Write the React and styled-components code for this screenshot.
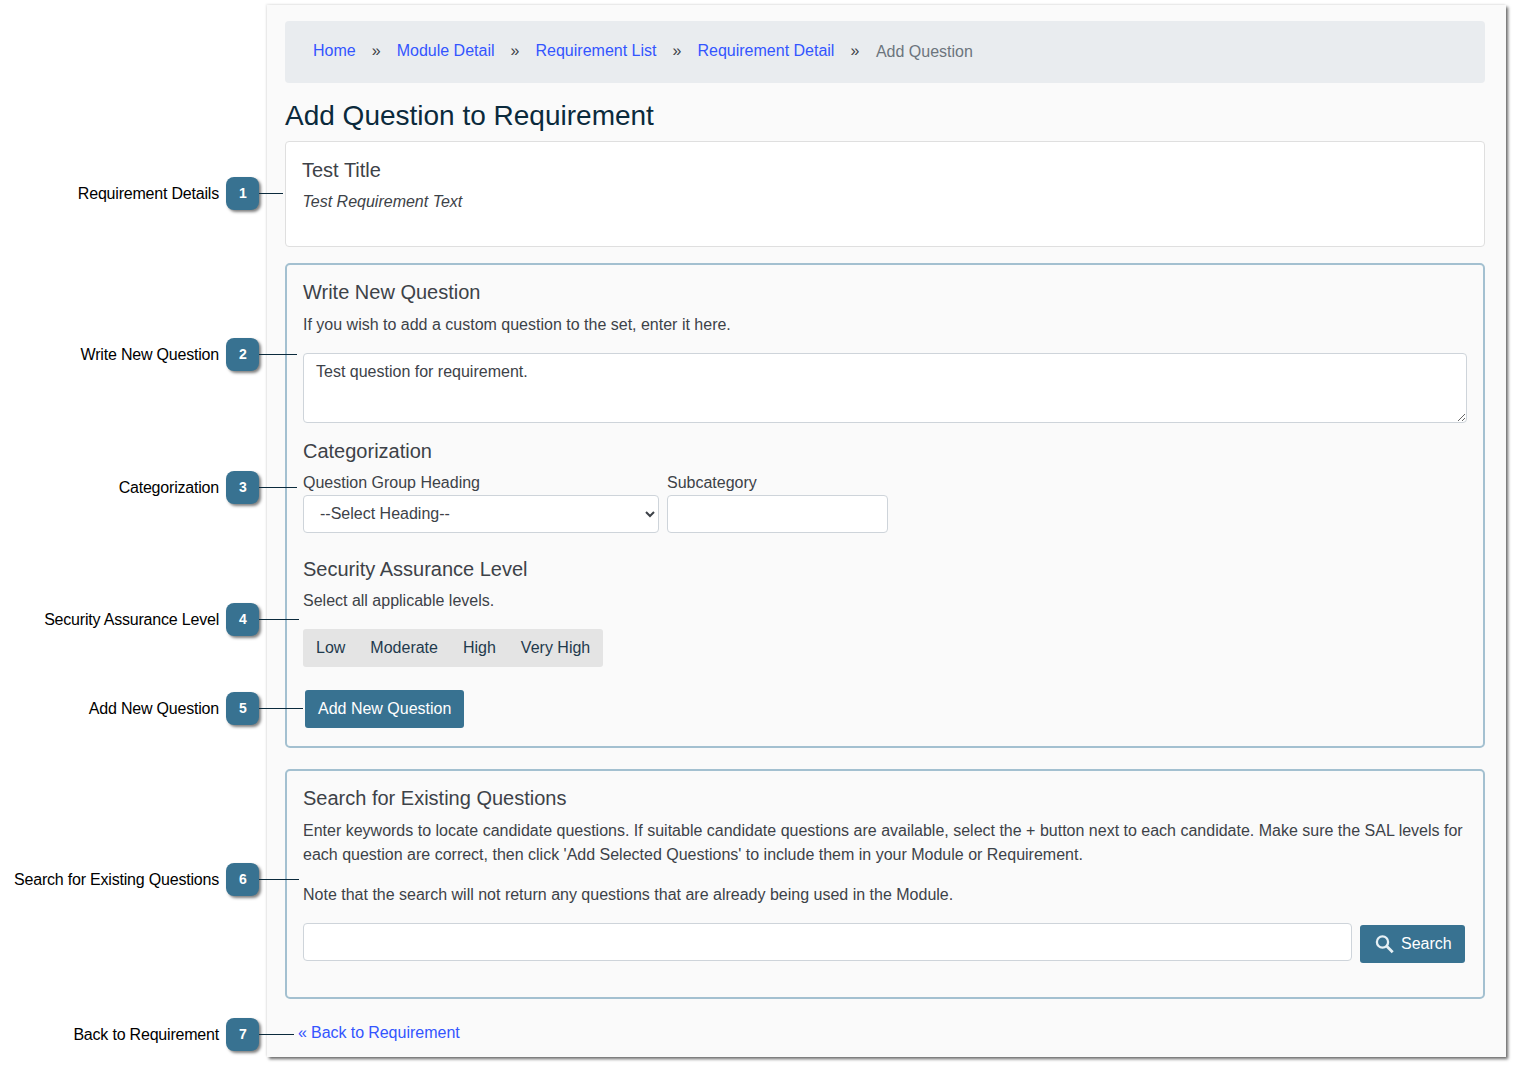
import React from "react";
import styled, { createGlobalStyle } from "styled-components";

const Global = createGlobalStyle`
  html, body { margin: 0; padding: 0; background: #fff; }
  body { font-family: "Liberation Sans", Arial, sans-serif; font-size: 16px; line-height: 24px; color: #3d4248; }
  * { box-sizing: border-box; }
`;

const Page = styled.div`
  position: relative;
  width: 1515px;
  height: 1066px;
  padding: 5px 0 0 267px;
  overflow: hidden;
`;
const Panel = styled.main`
  width: 1239px;
  height: 1052px;
  padding: 16px 21px 0 18px;
  background: #fafafa;
  box-shadow: 2px 2px 3px rgba(0,0,0,.6), -1px -1px 2px rgba(0,0,0,.08);
`;
const Breadcrumb = styled.nav`
  display: flex;
  align-items: center;
  height: 62px;
  padding: 0 0 0 28px;
  background: #e9ecef;
  border-radius: 4px;
`;
const Crumb = styled.a`
  color: #3355ff;
  margin-top: -3px;
`;
const Sep = styled.span`
  color: #3d4248;
  width: 41px;
  text-align: center;
  margin-top: -3px;
`;
const Current = styled.span`
  color: #6c757d;
  margin-left: 0.5px;
`;
const Title = styled.h1`
  margin: 16px 0 8px;
  font-size: 28px;
  line-height: 34px;
  font-weight: 400;
  color: #0b2a3c;
`;
const Card = styled.section`
  height: ${p => p.$h}px;
  margin-bottom: ${p => p.$mb || 0}px;
  padding: ${p => p.$pt}px 16px 0 16px;
  border-radius: ${p => p.$plain ? 4 : 5}px;
  background: ${p => p.$plain ? "#fff" : "transparent"};
  border: ${p => p.$plain ? "1px solid #dfdfdf" : "2px solid #a3c0d0"};
`;
const CardTitle = styled.h2`
  margin: 0 0 ${p => p.$mb || 8}px;
  font-size: 20px;
  line-height: 24px;
  font-weight: 400;
  color: #3d4248;
`;
const Para = styled.p`
  margin: 0 0 ${p => p.$mb || 0}px;
`;
const Em = styled.em`
  display: block;
  color: #3d4248;
  margin-left: 0.5px;
`;
const TextArea = styled.textarea`
  display: block;
  width: 100%;
  height: 70px;
  margin: 16px 0 16px;
  padding: 6px 12px;
  font: 16px/24px "Liberation Sans", Arial, sans-serif;
  color: #3d4248;
  background: #fff;
  border: 1px solid #ced4da;
  border-radius: 4px;
`;
const FieldRow = styled.div`
  display: flex;
  gap: 8px;
  margin-bottom: 24px;
`;
const Field = styled.label`
  display: flex;
  flex-direction: column;
  width: ${p => p.$w}px;
`;
const FieldLabel = styled.span`
  height: 25px;
  padding-top: 1px;
`;
const Select = styled.select`
  height: 38px;
  width: 100%;
  padding: 0 12px 1px;
  font: 16px "Liberation Sans", Arial, sans-serif;
  color: #3d4248;
  background: #fff;
  border: 1px solid #ced4da;
  border-radius: 4px;
`;
const Input = styled.input`
  display: block;
  height: 38px;
  width: ${p => p.$w ? p.$w + "px" : "100%"};
  padding: 6px 12px;
  background: #fff;
  border: 1px solid #ced4da;
  border-radius: 4px;
`;
const LevelGroup = styled.div`
  display: inline-flex;
  height: 38px;
  margin: 16px 0 23px;
  padding: 0 0.5px;
  background: #e4e4e4;
  border-radius: 3px;
  color: #1f3a4d;
`;
const Level = styled.span`
  padding: 7px 12.5px;
`;
const Button = styled.button`
  display: ${p => p.$flex ? "flex" : "block"};
  align-items: center;
  gap: 7px;
  height: 38px;
  margin-left: ${p => p.$ml || 0}px;
  padding: 0 13px;
  font: 16px "Liberation Sans", Arial, sans-serif;
  color: #fff;
  background: #387291;
  border: 0;
  border-radius: 3px;
`;
const SearchRow = styled.div`
  display: flex;
  gap: 8px;
  align-items: flex-start;
  margin: 16px 2px 0 0;
`;
const SearchButton = styled(Button)`
  margin-top: 2px;
  padding: 0 13px 0 15px;
  width: 105px;
  flex: none;
`;
const BackLink = styled.a`
  display: block;
  margin: 22px 0 0 13px;
  color: #3355ff;
  word-spacing: -0.33px;
`;

const Callout = styled.div`
  position: absolute;
  top: ${p => p.$top}px;
  left: 0;
  width: 226px;
  height: 33px;
  display: flex;
  align-items: center;
  justify-content: flex-end;
`;
const CalloutLabel = styled.span`
  color: #000;
  margin-right: 7px;
  letter-spacing: -0.2px;
  white-space: nowrap;
`;
const Badge = styled.b`
  position: absolute;
  left: 226px;
  top: 0;
  width: 33px;
  height: 33px;
  display: flex;
  align-items: center;
  justify-content: center;
  padding: 0 0 1px 1px;
  font-size: 14px;
  font-weight: 700;
  color: #fff;
  background: #387291;
  border-radius: 8px;
  box-shadow: 2px 2px 3px rgba(0,0,0,.5);
`;
const Leader = styled.i`
  position: absolute;
  left: 259px;
  top: 16px;
  width: ${p => p.$w}px;
  height: 1px;
  background: #0b2a3c;
`;

const callouts = [
  { n: 1, label: "Requirement Details", top: 177, w: 24 },
  { n: 2, label: "Write New Question", top: 338, w: 38 },
  { n: 3, label: "Categorization", top: 471, w: 38 },
  { n: 4, label: "Security Assurance Level", top: 603, w: 40 },
  { n: 5, label: "Add New Question", top: 692, w: 44 },
  { n: 6, label: "Search for Existing Questions", top: 863, w: 40 },
  { n: 7, label: "Back to Requirement", top: 1018, w: 35 },
];

export default function App() {
  return (
    <Page>
      <Global />
      <Panel>
        <Breadcrumb>
          <Crumb>Home</Crumb><Sep>»</Sep>
          <Crumb>Module Detail</Crumb><Sep>»</Sep>
          <Crumb>Requirement List</Crumb><Sep>»</Sep>
          <Crumb>Requirement Detail</Crumb><Sep>»</Sep>
          <Current>Add Question</Current>
        </Breadcrumb>
        <Title>Add Question to Requirement</Title>
        <Card $plain $h={106} $mb={16} $pt={16}>
          <CardTitle $mb={8}>Test Title</CardTitle>
          <Em>Test Requirement Text</Em>
        </Card>
        <Card $h={485} $mb={21} $pt={15}>
          <CardTitle $mb={9}>Write New Question</CardTitle>
          <Para>If you wish to add a custom question to the set, enter it here.</Para>
          <TextArea defaultValue="Test question for requirement." />
          <CardTitle $mb={7}>Categorization</CardTitle>
          <FieldRow>
            <Field $w={356}>
              <FieldLabel>Question Group Heading</FieldLabel>
              <Select defaultValue="">
                <option value="">--Select Heading--</option>
              </Select>
            </Field>
            <Field $w={221}>
              <FieldLabel>Subcategory</FieldLabel>
              <Input />
            </Field>
          </FieldRow>
          <CardTitle>Security Assurance Level</CardTitle>
          <Para>Select all applicable levels.</Para>
          <LevelGroup>
            <Level>Low</Level>
            <Level>Moderate</Level>
            <Level>High</Level>
            <Level>Very High</Level>
          </LevelGroup>
          <Button $ml={2}>Add New Question</Button>
        </Card>
        <Card $h={230} $pt={15}>
          <CardTitle $mb={9}>Search for Existing Questions</CardTitle>
          <Para $mb={16}>
            Enter keywords to locate candidate questions. If suitable candidate questions are available, select the + button next to each candidate. Make sure the SAL levels for each question are correct, then click 'Add Selected Questions' to include them in your Module or Requirement.
          </Para>
          <Para>Note that the search will not return any questions that are already being used in the Module.</Para>
          <SearchRow>
            <Input />
            <SearchButton $flex>
              <svg width="19" height="19" viewBox="0 0 19 19" fill="none" stroke="#e6f0f5" strokeWidth="2.3">
                <circle cx="7.5" cy="7" r="5.6" />
                <path d="M11.8 11.3 L17.7 17.2" strokeWidth="2.8" />
              </svg>
              Search
            </SearchButton>
          </SearchRow>
        </Card>
        <BackLink>« Back to Requirement</BackLink>
      </Panel>
      {callouts.map(c => (
        <Callout key={c.n} $top={c.top}>
          <CalloutLabel>{c.label}</CalloutLabel>
          <Badge>{c.n}</Badge>
          <Leader $w={c.w} />
        </Callout>
      ))}
    </Page>
  );
}
